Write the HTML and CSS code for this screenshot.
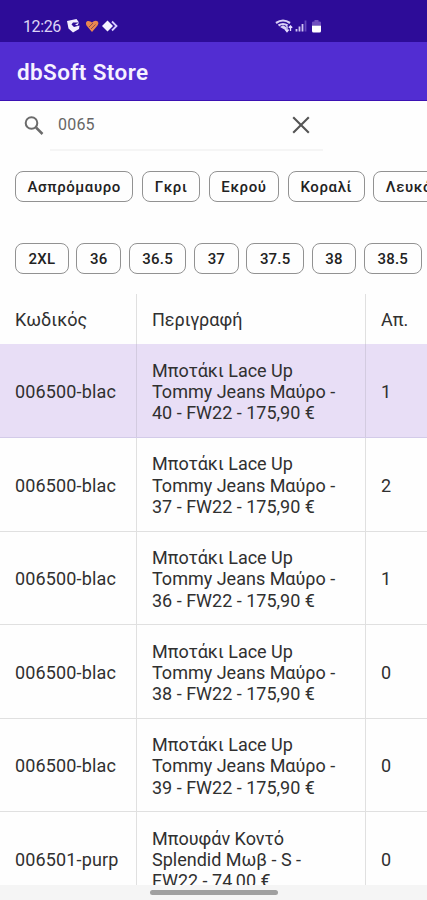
FILE: index.html
```html
<!DOCTYPE html>
<html lang="el">
<head>
    <meta charset="UTF-8">
    <meta name="viewport" content="width=device-width, initial-scale=1.0">
    <title>dbSoft Store</title>
    <link rel="stylesheet" href="styles.css">
</head>
<body>
    <div class="screen">
        <!-- Status bar -->
        <div class="status-bar">
            <span class="clock">12:26</span>
            <svg class="notifications" width="54" height="16" viewBox="0 0 54 16">
                <path d="M1 3 10.500 1 13 4.500 7 4.500 5.500 6.500 8 9l5.500-1.500L13 11l-6 3.500-4.500-4z" fill="#f3eeff"/>
                <path d="m9 6.500 4-2-1.500 3z" fill="#f3eeff"/>
                <path d="M26 14 20.500 7.500Q19 4 21.500 3q2.500-.5 4.500 1.500Q28.500 2 31 3q2.500 1.500.5 4.500z" fill="#e98750"/>
                <path d="m23 9 4-4m-2 6 4.500-4.500" stroke="#8f4a52" stroke-width="1" fill="none"/>
                <path d="m41.500 2.500 5.500 5.500-5.500 5.500L36 8z" fill="#f6f3ff"/>
                <path d="m46 3.500 4.500 4.500-4.500 4.500" stroke="#d8ccff" stroke-width="1.800" fill="none"/>
            </svg>
            <svg class="system" width="50" height="16" viewBox="0 0 50 16">
                <path d="M1 5Q8 0 15 5M3.500 7.500Q8 4.500 12.500 7.500" stroke="#d9cff5" stroke-width="2.200" fill="none"/>
                <path d="m5 9 3-1.800 3 1.800 1 4z" fill="#d9cff5"/>
                <path d="M12 8v5.500m-1.700-1.800 1.700 2 1.700-2M15.500 13V8m-1.700 1.800L15.500 8l1.700 1.800" stroke="#e6dfff" stroke-width="1.300" fill="none"/>
                <path d="M21.500 13.500V11M24.500 13.500V8.500M27.500 13.500V6" stroke="#cfc3f3" stroke-width="1.800"/>
                <path d="M30.500 13.500V2.500" stroke="#6547bb" stroke-width="1.800"/>
                <path d="M37 7V4.500Q37 3.500 38.500 3.500h1V2h4v1.500h1q1.500 0 1.500 1V7z" fill="#7050be"/>
                <path d="M37 7.500h9V13q0 1.500-1.500 1.500h-6Q37 14.500 37 13z" fill="#fff"/>
            </svg>
        </div>

        <header class="app-bar">
            <h1>dbSoft Store</h1>
        </header>

        <!-- Search field -->
        <div class="search">
            <svg class="search-icon" width="20" height="20" viewBox="0 0 20 20" fill="none" stroke="#6b6b6b">
                <circle cx="7.500" cy="7" r="5.800" stroke-width="2"/>
                <path d="m12 11.500 6.500 6.500" stroke-width="2.500"/>
            </svg>
            <div class="search-field">
                <span class="search-text">0065</span>
                <svg width="18" height="18" viewBox="0 0 18 18">
                    <path d="m1.200 1.200 15.600 15.600M16.800 1.200 1.200 16.800" stroke="#555" stroke-width="2.100"/>
                </svg>
            </div>
        </div>

        <!-- Filters -->
        <div class="chips colors">
            <span class="chip">Ασπρόμαυρο</span>
            <span class="chip">Γκρι</span>
            <span class="chip">Εκρού</span>
            <span class="chip">Κοραλί</span>
            <span class="chip">Λευκό</span>
        </div>
        <div class="chips sizes">
            <span class="chip">2XL</span>
            <span class="chip">36</span>
            <span class="chip">36.5</span>
            <span class="chip">37</span>
            <span class="chip">37.5</span>
            <span class="chip">38</span>
            <span class="chip">38.5</span>
        </div>

        <!-- Products -->
        <div class="products">
            <div class="row head">
                <div class="cell">Κωδικός</div>
                <div class="cell">Περιγραφή</div>
                <div class="cell">Απ.</div>
            </div>
            <div class="row selected">
                <div class="cell code">006500-blac</div>
                <div class="cell">Μποτάκι Lace Up<br>Tommy Jeans Μαύρο -<br>40 - FW22 - 175,90 €</div>
                <div class="cell">1</div>
            </div>
            <div class="row">
                <div class="cell code">006500-blac</div>
                <div class="cell">Μποτάκι Lace Up<br>Tommy Jeans Μαύρο -<br>37 - FW22 - 175,90 €</div>
                <div class="cell">2</div>
            </div>
            <div class="row">
                <div class="cell code">006500-blac</div>
                <div class="cell">Μποτάκι Lace Up<br>Tommy Jeans Μαύρο -<br>36 - FW22 - 175,90 €</div>
                <div class="cell">1</div>
            </div>
            <div class="row">
                <div class="cell code">006500-blac</div>
                <div class="cell">Μποτάκι Lace Up<br>Tommy Jeans Μαύρο -<br>38 - FW22 - 175,90 €</div>
                <div class="cell">0</div>
            </div>
            <div class="row">
                <div class="cell code">006500-blac</div>
                <div class="cell">Μποτάκι Lace Up<br>Tommy Jeans Μαύρο -<br>39 - FW22 - 175,90 €</div>
                <div class="cell">0</div>
            </div>
            <div class="row">
                <div class="cell code">006501-purp</div>
                <div class="cell">Μπουφάν Κοντό<br>Splendid Μωβ - S -<br>FW22 - 74,00 €</div>
                <div class="cell">0</div>
            </div>
        </div>

        <div class="nav-bar"><span class="handle"></span></div>
    </div>
</body>
</html>
```

FILE: styles.css
```css
:root {
    --status-color: #2d0c98;
    --primary-color: #522dd2;
    --selected-color: #e8def6;
    --line-color: #e0e0e0;
}

* {
    box-sizing: border-box;
}

body {
    margin: 0;
    font-family: Roboto, "Noto Sans", sans-serif;
    background-color: #fefefe;
    color: #303030;
}

.screen {
    display: flex;
    flex-direction: column;
    width: 427px;
    height: 900px;
    overflow: hidden;
}

.status-bar {
    display: flex;
    align-items: center;
    flex: 0 0 42px;
    padding: 10px 0 0 23px;
    background-color: var(--status-color);
}

.clock {
    width: 43px;
    font-size: 16px;
    letter-spacing: -0.4px;
    color: #ddd3f5;
}

.system {
    margin-left: 155px;
}

.app-bar {
    display: flex;
    align-items: center;
    flex: 0 0 58.5px;
    padding: 3px 17px 0;
    background-color: var(--primary-color);
    border-bottom: 1px solid #3c12b4;
}

h1 {
    margin: 0;
    font-size: 22.5px;
    font-weight: 600;
    letter-spacing: 0.4px;
    color: #f6f2ff;
}

.search {
    display: flex;
    align-items: center;
    flex: 0 0 50.5px;
    padding-left: 24px;
}

.search-field {
    display: flex;
    align-items: center;
    justify-content: space-between;
    width: 273px;
    height: 50px;
    margin-left: 6px;
    padding: 0 13px 0 8px;
    border-bottom: 2px solid #f5f5f5;
}

.search-text {
    font-size: 16px;
    letter-spacing: 0.2px;
    color: #666;
}

.chips {
    display: flex;
    flex: 0 0 31px;
    padding-left: 15px;
}

.colors {
    gap: 8.8px;
    margin-top: 20px;
}

.sizes {
    gap: 7.6px;
    margin-top: 41px;
}

.chip {
    display: flex;
    align-items: center;
    justify-content: center;
    flex-shrink: 0;
    padding: 0 12px;
    border: 1px solid #929292;
    border-radius: 8px;
    font-size: 15px;
    font-weight: 500;
    letter-spacing: 0.5px;
    color: #222;
}

.colors .chip {
    padding: 0 11.5px;
    letter-spacing: 0.6px;
}

.sizes .chip {
    padding: 0 12.6px;
    letter-spacing: 0.2px;
}

.products {
    flex: 1;
    min-height: 0;
    margin-top: 20px;
    overflow: hidden;
    font-size: 18px;
    line-height: 21.3px;
}

.row {
    display: grid;
    grid-template-columns: 137px 229px 61px;
    height: 93.6px;
    border-bottom: 1px solid var(--line-color);
}

.head {
    height: 50.4px;
    border-bottom: 0;
}

.cell {
    display: flex;
    align-items: center;
    padding: 2px 0 0 15px;
    border-right: 1px solid var(--line-color);
    white-space: nowrap;
}

.head .cell {
    padding-top: 1px;
}

.cell:last-child {
    border-right: 0;
}

.code {
    letter-spacing: 0.15px;
}

.selected {
    background-color: var(--selected-color);
    border-bottom-color: #d3cbe9;
}

.selected .cell {
    border-right-color: #d3cbe0;
}

.nav-bar {
    display: flex;
    justify-content: center;
    flex: 0 0 15px;
    padding-top: 5px;
    background-color: #f5f5f5;
}

.handle {
    width: 128px;
    height: 5px;
    border-radius: 3px;
    background-color: #a0a0a0;
}
```
